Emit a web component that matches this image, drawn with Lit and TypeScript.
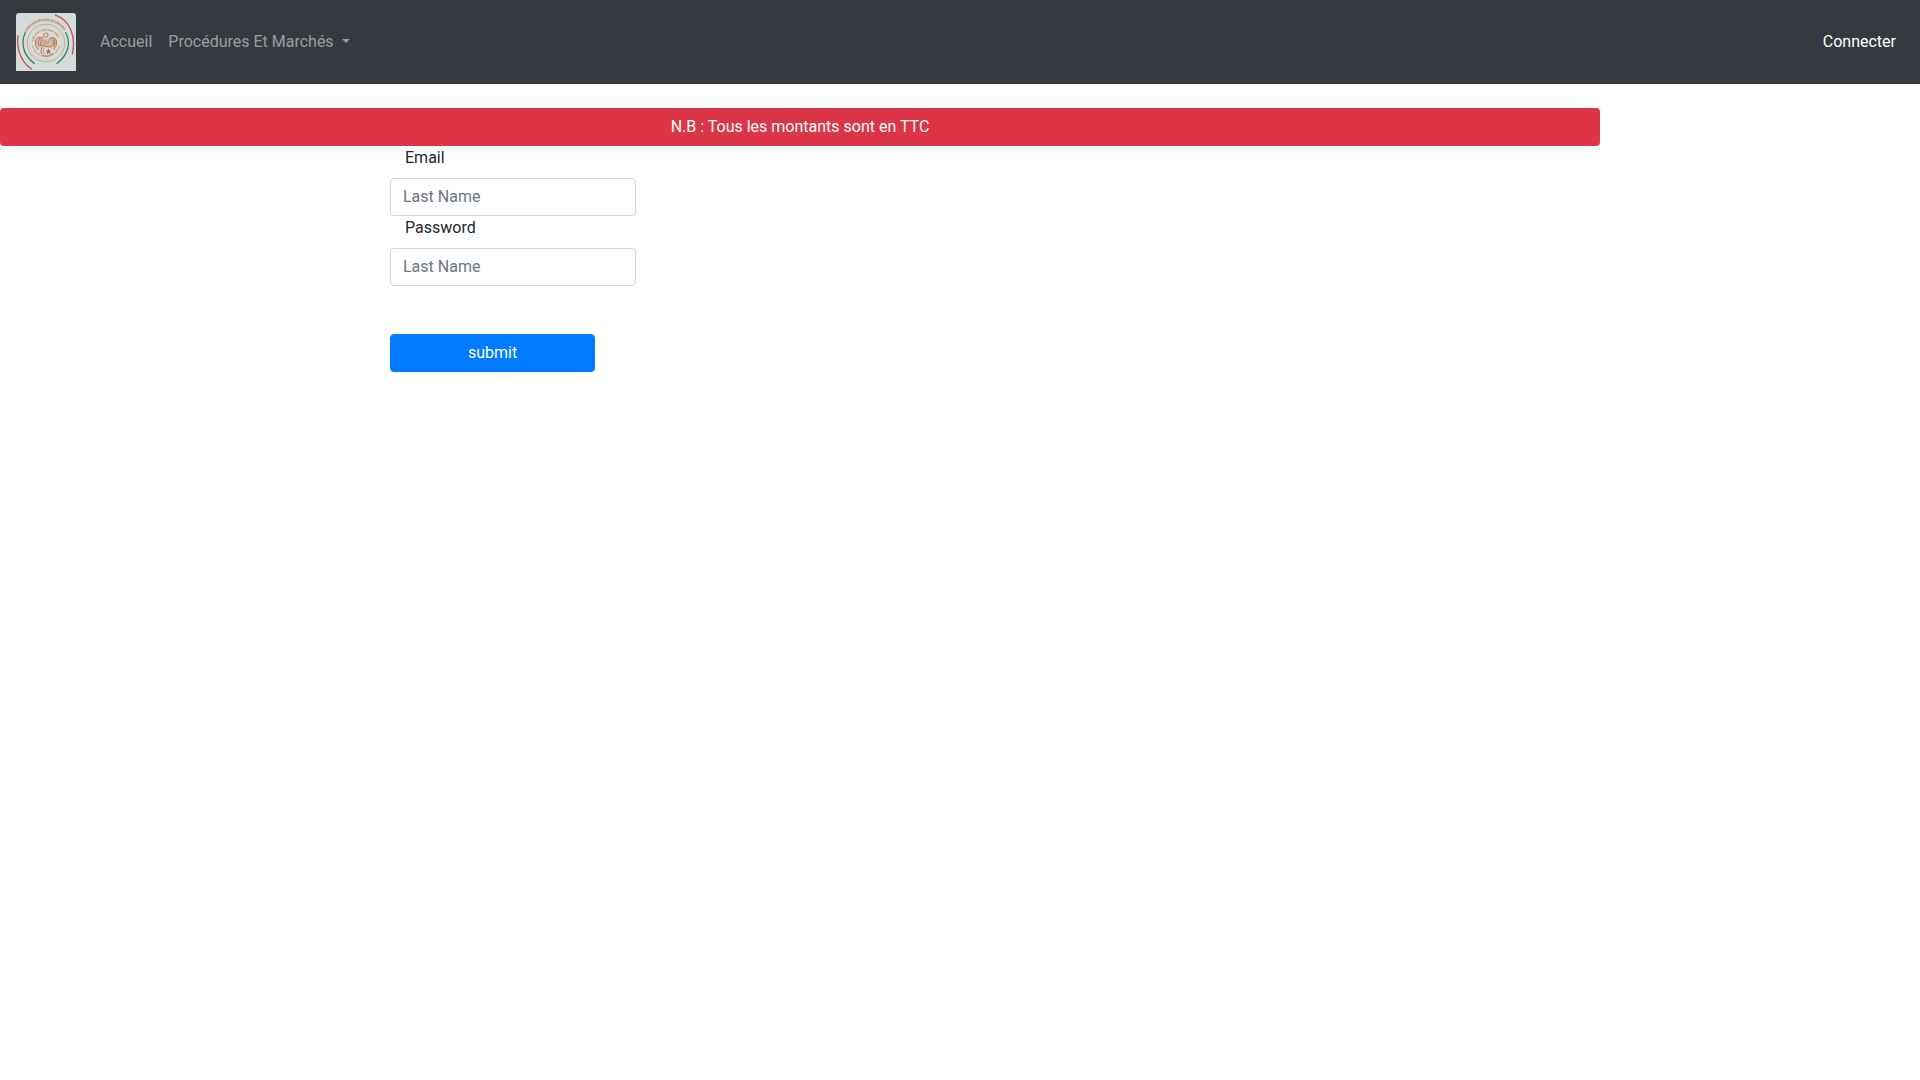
import { LitElement, html, css, svg } from "lit";
import { customElement } from "lit/decorators.js";

const emblem = svg`
  <svg class="emblem" viewBox="0 0 60 58" role="img" aria-label="Logo">
    <rect width="60" height="58" fill="#d3dcda" />
    <circle cx="30" cy="30" r="18.8" fill="#d7dad5" stroke="#cbaa94" stroke-width="1" />
    <circle cx="30" cy="30" r="17" fill="none" stroke="#d8cdc4" stroke-width="0.5" />
    <g fill="none" stroke="#c99a7b">
      <path d="M9.6 18.2A23.6 23.6 0 0 1 49.2 17" stroke-width="2.6" stroke-dasharray="1.6 .5 .8 .6 2.4 .5" />
      <path d="M16.5 28A14 14 0 0 1 42.5 24" stroke-width="1.8" stroke-dasharray="1.4 .9 2.2 .7 .8 1" />
      <path d="M16.5 33A14 14 0 0 0 43.5 33" stroke-width="1.3" stroke-dasharray="2 1 1 .8" />
    </g>
    <path d="M20 27Q22 24 26 25L30 27L34 25Q39 24 40 28Q40.500 33 37 36L31 34L24 36Q19 32 20 27Z" fill="#d0a890" opacity=".6" />
    <g fill="none" stroke="#b87850" stroke-width="1" stroke-linecap="round">
      <path d="M27.5 22Q27.500 20 30 20T32 22Q31.800 24.500 29.700 24.500T27.500 22" />
      <path d="M27 25Q20.500 22.500 19.500 28Q18.500 33 22 36.500" />
      <path d="M24 25.500Q21 28 22.500 31.500M26 26Q23.500 29 25 32" />
      <path d="M33 26Q38.500 22 40.500 28Q41.500 33 38 36.500" />
      <path d="M35.500 26Q38.500 28 37 32M38 25.500Q39.800 29 38.500 33" />
      <path d="M27 27.500L28.500 31M30 26.500V30.500M33 27.500L31.500 31" stroke-width=".7" />
      <path d="M23 32.500Q26 31 29 33T36 33" />
      <path d="M26 35Q23 40 28 43Q33 44.500 37 40.500" />
      <path d="M28 35.500Q25.500 39 29 41" stroke-width=".7" />
    </g>
    <path d="M32.300 35.500l.9 2 2.200-.1-1.600 1.500.8 2.200-2-1.200-1.900 1.300.5-2.300-1.700-1.300 2.200-.1z" fill="#b06a42" />
    <g fill="none" stroke-linecap="round">
      <path d="M9.300 19.500C5 29 6 41 18.300 50.500" stroke="#2f8a61" stroke-width="1.300" />
      <path d="M49.500 19.500C55 29 53 41 41 50.500" stroke="#2f8a61" stroke-width="1.300" />
      <path d="M2 23C.3 36 5 49 15.600 56.200" stroke="#c8505b" stroke-width="1.300" />
      <path d="M39.500 2.200C53 7 60.500 22 56.300 41" stroke="#c8505b" stroke-width="1.300" />
    </g>
  </svg>
`;

@customElement("app-root")
export class AppRoot extends LitElement {
  static styles = css`
    :host {
      display: block;
      font-family: Roboto, "Liberation Sans", sans-serif;
      font-size: 16px;
      line-height: 24px;
      color: #212529;
      background: #fff;
    }
    *,
    *::before,
    *::after {
      box-sizing: border-box;
    }
    .navbar {
      display: flex;
      align-items: center;
      gap: 16px;
      padding: 13px 16px;
      background: #343a40;
    }
    .brand {
      display: block;
    }
    .emblem {
      display: block;
      width: 60px;
      height: 58px;
      border-radius: 3px 3px 0 0;
    }
    .links {
      display: flex;
      flex: 1;
      list-style: none;
      margin: 0;
      padding: 0;
    }
    .end {
      margin-left: auto;
    }
    .link {
      display: block;
      padding: 8px;
      border: 0;
      background: none;
      font: inherit;
      color: rgba(255, 255, 255, 0.5);
      text-decoration: none;
      cursor: pointer;
    }
    .current {
      color: #fff;
    }
    .toggle {
      display: flex;
      align-items: center;
      gap: 8px;
    }
    .toggle::after {
      content: "";
      border-top: 4px solid;
      border-left: 4px solid transparent;
      border-right: 4px solid transparent;
      margin-bottom: 2px;
    }
    .notice {
      width: 83.3333%;
      margin-top: 24px;
      padding: 7px 12px;
      border-radius: 4px;
      background: #dc3545;
      color: #fff;
      text-align: center;
    }
    .form {
      display: flex;
      flex-direction: column;
      align-items: flex-start;
      max-width: 1140px;
      margin: 0 auto;
    }
    .label {
      padding: 0 15px;
      margin-bottom: 8px;
    }
    .field {
      width: 246px;
      height: 38px;
      padding: 5px 12px 7px;
      border: 1px solid #ced4da;
      border-radius: 4px;
      background: #fff;
      font: inherit;
      color: #495057;
    }
    .field::placeholder {
      color: #6c757d;
      opacity: 1;
    }
    .submit {
      width: 18%;
      margin-top: 48px;
      padding: 6px 12px;
      border: 1px solid #007bff;
      border-radius: 4px;
      background: #007bff;
      color: #fff;
      font: inherit;
      cursor: pointer;
    }
  `;

  render() {
    return html`
      <nav class="navbar">
        <a class="brand" href="#">${emblem}</a>
        <ul class="links">
          <li><a class="link" href="#">Accueil</a></li>
          <li>
            <button class="link toggle" type="button" aria-haspopup="true">Procédures Et Marchés</button>
          </li>
          <li class="end"><a class="link current" href="#">Connecter</a></li>
        </ul>
      </nav>
      <main>
        <div class="notice">N.B : Tous les montants sont en TTC</div>
        <form class="form" @submit=${(e: Event) => e.preventDefault()}>
          <label class="label" for="email">Email</label>
          <input class="field" id="email" type="text" placeholder="Last Name" />
          <label class="label" for="password">Password</label>
          <input class="field" id="password" type="password" placeholder="Last Name" />
          <button class="submit" type="submit">submit</button>
        </form>
      </main>
    `;
  }
}
